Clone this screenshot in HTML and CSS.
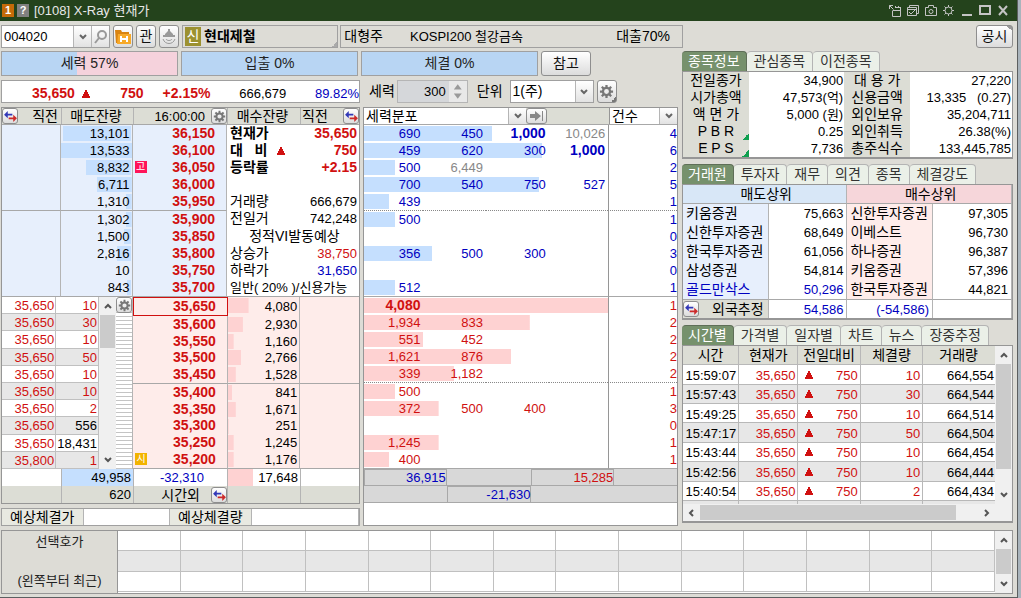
FILE: index.html
```html
<!DOCTYPE html>
<html lang="ko">
  <head>
    <meta charset="UTF-8" />
    <meta name="viewport" content="width=device-width, initial-scale=1.0" />
    <title>[0108] X-Ray 현재가</title>
    <link rel="stylesheet" href="styles.css" />
  </head>
  <body>
    <!-- 공용 아이콘 -->
    <svg class="symbols" aria-hidden="true">
      <symbol id="gear" viewBox="0 0 16 16">
        <path fill="none" stroke="currentColor" stroke-width="2.4" d="M8 1v3M8 12v3M1 8h3M12 8h3M3 3l2.2 2.2M10.8 10.8L13 13M13 3l-2.2 2.2M5.2 10.8L3 13" />
        <circle cx="8" cy="8" r="3.8" fill="none" stroke="currentColor" stroke-width="2.4" />
      </symbol>
      <symbol id="swap" viewBox="0 0 14 12">
        <path fill="#3338b8" d="M0 4l4-4v3h5v2H4v3z" />
        <path fill="#cc2a2a" d="M14 8l-4-4v3H5v2h5v3z" />
      </symbol>
      <symbol id="down" viewBox="0 0 8 6">
        <path fill="none" stroke="currentColor" stroke-width="2" d="M1 1l3 3 3-3" />
      </symbol>
      <symbol id="up" viewBox="0 0 8 6">
        <path fill="none" stroke="currentColor" stroke-width="2" d="M1 5l3-3 3 3" />
      </symbol>
      <symbol id="left" viewBox="0 0 6 8">
        <path fill="none" stroke="currentColor" stroke-width="2" d="M5 1L2 4l3 3" />
      </symbol>
      <symbol id="right" viewBox="0 0 6 8">
        <path fill="none" stroke="currentColor" stroke-width="2" d="M1 1l3 3-3 3" />
      </symbol>
      <symbol id="tri" viewBox="0 0 8 8">
        <path fill="currentColor" d="M3 0h2v2h1v2h1v2h1v2H0V6h1V4h1V2h1z" />
      </symbol>
    </svg>

    <div class="window">
      <header class="titlebar">
        <span class="tag orange">1</span>
        <span class="tag gray">?</span>
        <h1>[0108] X-Ray 현재가</h1>
        <div class="win_btns">
          <svg width="14" height="13" viewBox="0 0 14 13"><path d="M1.500 1.500l4 4M1.500 5V1.500H5M7 3.500h6M4.500 7v5.500h8v-9M4.500 6.500h8M7.500 2v2M10.500 2v2" /></svg>
          <svg width="14" height="13" viewBox="0 0 14 13"><path d="M3.500 3V1.500h9v8H11M1.500 3.500h9v8h-9zM1.500 5.500h9M3 8l2 2 4-4" /></svg>
          <svg width="14" height="13" viewBox="0 0 14 13"><path d="M1.500 3.500h3v-2h5v2h3v8h-11z" /><circle cx="7" cy="7.500" r="2" /></svg>
          <svg width="13" height="13" viewBox="0 0 13 13"><circle cx="6.500" cy="6.500" r="3.500" /><path d="M6.500 1v2M6.500 10v2M1 6.500h2M10 6.500h2M2.500 2.500L4 4M9 9l1.500 1.500M10.500 2.500L9 4M4 9l-1.500 1.500" /></svg>
          <svg class="bold" width="12" height="13" viewBox="0 0 12 13"><path d="M1 11h10" /></svg>
          <svg class="bold" width="12" height="13" viewBox="0 0 12 13"><path d="M1 2h10v8H1z" /></svg>
          <svg class="bold" width="12" height="13" viewBox="0 0 12 13"><path d="M2 2l8 9M10 2l-8 9" /></svg>
        </div>
      </header>

      <div class="toolbar">
        <div class="code_box">
          <input type="text" value="004020" aria-label="종목코드" />
          <button class="arrow" aria-label="목록"><svg width="8" height="6"><use href="#down" /></svg></button>
          <button class="arrow" aria-label="검색"><svg class="lens" width="14" height="14" viewBox="0 0 14 14"><circle cx="8" cy="5" r="4" /><path d="M5 8l-4 5" /></svg></button>
        </div>
        <button class="btn icon" aria-label="보유종목">
          <svg width="16" height="15" viewBox="0 0 16 15"><path fill="#d98410" d="M0 1h6l1 2h7v11H1z" /><path fill="#f7a928" d="M3 5h13v10H2z" /><path stroke="#fff" stroke-width="2" d="M6 7v6M12 7v6M6 10h6" /></svg>
        </button>
        <button class="btn icon">관</button>
        <button class="btn icon" aria-label="알림">
          <svg width="14" height="15" viewBox="0 0 14 15"><path fill="#999" d="M6 0h2v2l3 3v3H3V5l3-3zM1 6h12v2H1z" /><path fill="none" stroke="#999" d="M4 10c1 2 5 2 6 0M1 10c2 6 10 6 12 0" /></svg>
        </button>
        <div class="name_box"><span class="credit">신</span><strong>현대제철</strong></div>
        <div class="kind_box"><span>대형주</span><span class="kospi">KOSPI200 철강금속</span><span>대출70%</span></div>
        <button class="btn notice">공시</button>
      </div>

      <main class="main">
        <section class="left">
          <div class="power">
            <div class="bar half">세력 57%</div>
            <div class="bar">입출 0%</div>
            <div class="bar">체결 0%</div>
            <button class="btn">참고</button>
          </div>

          <div class="split">
            <div class="quote">
              <b>35,650</b>
              <svg width="8" height="8"><use href="#tri" /></svg>
              <b>750</b>
              <b>+2.15%</b>
              <span>666,679</span>
              <span class="blue">89.82%</span>
            </div>
            <div class="options">
              <label for="power">세력</label>
              <div class="spin">
                <input id="power" type="text" value="300" />
                <div class="steps"><button aria-label="증가"></button><button aria-label="감소"></button></div>
              </div>
              <label for="unit">단위</label>
              <div class="combo unit">
                <select id="unit"><option>1(주)</option></select>
                <span class="arrow"><svg width="8" height="6"><use href="#down" /></svg></span>
              </div>
              <button class="btn icon more_menu" aria-label="설정"><svg width="15" height="15"><use href="#gear" /></svg></button>
            </div>
          </div>

          <div class="split grow">
            <div class="col">
              <!-- 호가창 -->
              <div class="panel">
                <div class="book_head">
                  <div><button class="btn mini" aria-label="전환"><svg width="13" height="11"><use href="#swap" /></svg></button><span>직전</span></div>
                  <div class="mid">매도잔량</div>
                  <div class="clock"><span>16:00:00</span><button class="btn mini" aria-label="설정"><svg width="13" height="13"><use href="#gear" /></svg></button></div>
                  <div class="mid">매수잔량</div>
                  <div><span>직전</span><button class="btn mini" aria-label="전환"><svg width="13" height="11"><use href="#swap" /></svg></button></div>
                </div>

                <div class="asks">
                  <table class="book ask">
                    <colgroup><col class="c59" /><col class="c72" /><col /></colgroup>
                    <tr><td></td><td style="--w: 96%">13,101</td><td class="price">36,150</td></tr>
                    <tr><td></td><td style="--w: 100%">13,533</td><td class="price">36,100</td></tr>
                    <tr><td></td><td style="--w: 64%">8,832</td><td class="price"><i class="badge high">고</i>36,050</td></tr>
                    <tr><td></td><td style="--w: 49%">6,711</td><td class="price">36,000</td></tr>
                    <tr class="line"><td></td><td style="--w: 8%">1,310</td><td class="price">35,950</td></tr>
                    <tr><td></td><td style="--w: 8%">1,302</td><td class="price">35,900</td></tr>
                    <tr><td></td><td style="--w: 10%">1,500</td><td class="price">35,850</td></tr>
                    <tr><td></td><td style="--w: 20%">2,816</td><td class="price">35,800</td></tr>
                    <tr><td></td><td style="--w: 0%">10</td><td class="price">35,750</td></tr>
                    <tr><td></td><td style="--w: 6%">843</td><td class="price">35,700</td></tr>
                  </table>
                  <table class="info">
                    <tr class="b"><th>현재가</th><td class="red">35,650</td></tr>
                    <tr class="b"><th>대&nbsp;&nbsp; 비 <svg width="8" height="8"><use href="#tri" /></svg></th><td class="red">750</td></tr>
                    <tr class="b"><th>등락률</th><td class="red">+2.15</td></tr>
                    <tr><td colspan="2">&nbsp;</td></tr>
                    <tr><th>거래량</th><td>666,679</td></tr>
                    <tr><th>전일거</th><td>742,248</td></tr>
                    <tr><th colspan="2" class="center">정적VI발동예상</th></tr>
                    <tr><th>상승가</th><td class="red">38,750</td></tr>
                    <tr><th>하락가</th><td class="blue">31,650</td></tr>
                    <tr><th colspan="2" class="state">일반( 20% )/신용가능</th></tr>
                  </table>
                </div>

                <div class="bids">
                  <div class="ticks">
                    <table class="tick">
                      <colgroup><col class="c54" /><col /></colgroup>
                      <tr><td>35,650</td><td>10</td></tr>
                      <tr><td>35,650</td><td>30</td></tr>
                      <tr><td>35,650</td><td>10</td></tr>
                      <tr><td>35,650</td><td>50</td></tr>
                      <tr><td>35,650</td><td>10</td></tr>
                      <tr><td>35,650</td><td>10</td></tr>
                      <tr><td>35,650</td><td>2</td></tr>
                      <tr><td>35,650</td><td class="black">556</td></tr>
                      <tr><td>35,650</td><td class="black">18,431</td></tr>
                      <tr><td>35,800</td><td>1</td></tr>
                    </table>
                    <div class="vscroll">
                      <svg width="8" height="6"><use href="#up" /></svg>
                      <div class="track"><div class="thumb" style="height: 24%"></div></div>
                      <svg width="8" height="6"><use href="#down" /></svg>
                    </div>
                    <div class="gauge">
                      <button class="btn mini" aria-label="설정"><svg width="13" height="13"><use href="#gear" /></svg></button>
                    </div>
                  </div>
                  <table class="book bid">
                    <colgroup><col class="c94" /><col class="c73" /><col /></colgroup>
                    <tr class="now"><td class="price">35,650</td><td style="--w: 29%">4,080</td><td></td></tr>
                    <tr><td class="price">35,600</td><td style="--w: 21%">2,930</td><td></td></tr>
                    <tr><td class="price">35,550</td><td style="--w: 8%">1,160</td><td></td></tr>
                    <tr><td class="price">35,500</td><td style="--w: 19%">2,766</td><td></td></tr>
                    <tr class="line"><td class="price">35,450</td><td style="--w: 11%">1,528</td><td></td></tr>
                    <tr><td class="price">35,400</td><td style="--w: 6%">841</td><td></td></tr>
                    <tr><td class="price">35,350</td><td style="--w: 11%">1,671</td><td></td></tr>
                    <tr><td class="price">35,300</td><td style="--w: 1%">251</td><td></td></tr>
                    <tr><td class="price">35,250</td><td style="--w: 8%">1,245</td><td></td></tr>
                    <tr><td class="price"><i class="badge open">시</i>35,200</td><td style="--w: 8%">1,176</td><td></td></tr>
                  </table>
                </div>

                <div class="sums">
                  <div></div><div class="ask_sum">49,958</div><div class="diff">-32,310</div><div class="bid_sum">17,648</div><div></div>
                </div>
                <div class="sums after">
                  <div></div><div>620</div>
                  <div class="clock"><span>시간외</span><button class="btn mini" aria-label="전환"><svg width="13" height="11"><use href="#swap" /></svg></button></div>
                  <div></div><div></div>
                </div>
              </div>

              <div class="expect">
                <label for="exp_price">예상체결가</label><input id="exp_price" type="text" />
                <label for="exp_qty">예상체결량</label><input id="exp_qty" type="text" />
              </div>
            </div>

            <!-- 세력분포 -->
            <div class="panel spread">
              <div class="spread_head">
                <div class="combo">
                  <select aria-label="분포"><option>세력분포</option></select>
                  <span class="arrow"><svg width="8" height="6"><use href="#down" /></svg></span>
                </div>
                <button class="btn mini" aria-label="다음"><svg width="14" height="10" viewBox="0 0 14 10"><path fill="#888" d="M0 3h5V0l6 5-6 5V7H0zM12 0h1v10h-1z" /></svg></button>
                <div></div>
                <div class="combo">
                  <select aria-label="건수"><option>건수</option></select>
                  <span class="arrow"><svg width="8" height="6"><use href="#down" /></svg></span>
                </div>
              </div>
              <table class="dist sell">
                <colgroup><col class="p19" /><col class="p20" /><col class="p20" /><col class="p19" /><col /></colgroup>
                <tr style="--w: 41%"><td>690</td><td>450</td><td class="big">1,000</td><td class="dim">10,026</td><td>4</td></tr>
                <tr style="--w: 57%"><td>459</td><td>620</td><td>300</td><td class="big">1,000</td><td>6</td></tr>
                <tr style="--w: 10%"><td>500</td><td class="dim">6,449</td><td></td><td></td><td>2</td></tr>
                <tr style="--w: 56%"><td>700</td><td>540</td><td>750</td><td>527</td><td>5</td></tr>
                <tr class="line" style="--w: 8%"><td>439</td><td></td><td></td><td></td><td>1</td></tr>
                <tr style="--w: 10%"><td>500</td><td></td><td></td><td></td><td>1</td></tr>
                <tr style="--w: 0%"><td></td><td></td><td></td><td></td><td>0</td></tr>
                <tr style="--w: 22%"><td>356</td><td>500</td><td>300</td><td></td><td>3</td></tr>
                <tr style="--w: 0%"><td></td><td></td><td></td><td></td><td>0</td></tr>
                <tr style="--w: 10%"><td>512</td><td></td><td></td><td></td><td>1</td></tr>
              </table>
              <table class="dist buy">
                <colgroup><col class="p19" /><col class="p20" /><col class="p20" /><col class="p19" /><col /></colgroup>
                <tr style="--w: 78%"><td class="big">4,080</td><td></td><td></td><td></td><td>1</td></tr>
                <tr style="--w: 53%"><td>1,934</td><td>833</td><td></td><td></td><td>2</td></tr>
                <tr style="--w: 19%"><td>551</td><td>452</td><td></td><td></td><td>2</td></tr>
                <tr style="--w: 47%"><td>1,621</td><td>876</td><td></td><td></td><td>2</td></tr>
                <tr class="line" style="--w: 29%"><td>339</td><td>1,182</td><td></td><td></td><td>2</td></tr>
                <tr style="--w: 10%"><td>500</td><td></td><td></td><td></td><td>1</td></tr>
                <tr style="--w: 24%"><td>372</td><td>500</td><td>400</td><td></td><td>3</td></tr>
                <tr style="--w: 0%"><td></td><td></td><td></td><td></td><td>0</td></tr>
                <tr style="--w: 24%"><td>1,245</td><td></td><td></td><td></td><td>1</td></tr>
                <tr style="--w: 8%"><td>400</td><td></td><td></td><td></td><td>1</td></tr>
              </table>
              <div class="totals">
                <span class="blue box">36,915</span><span></span><span class="red box">15,285</span><span></span>
                <span></span><span class="blue box">-21,630</span><span></span><span></span>
              </div>
            </div>
          </div>
        </section>

        <aside class="right">
          <div>
            <div class="tabs">
              <button class="on">종목정보</button><button>관심종목</button><button>이전종목</button>
            </div>
            <table class="stock">
              <colgroup><col class="p20" /><col class="p29" /><col class="p20" /><col /></colgroup>
              <tr><th>전일종가</th><td>34,900</td><th>대 용 가</th><td>27,220</td></tr>
              <tr><th>시가총액</th><td>47,573(억)</td><th>신용금액</th><td>13,335 &nbsp; (0.27)</td></tr>
              <tr><th>액 면 가</th><td>5,000 (원)</td><th>외인보유</th><td>35,204,711</td></tr>
              <tr><th class="more">P B R</th><td>0.25</td><th>외인취득</th><td>26.38(%)</td></tr>
              <tr><th class="more">E P S</th><td>7,736</td><th>총주식수</th><td>133,445,785</td></tr>
            </table>
          </div>

          <div>
            <div class="tabs">
              <button class="on">거래원</button><button>투자자</button><button>재무</button><button>의견</button><button>종목</button><button>체결강도</button>
            </div>
            <table class="broker">
              <colgroup><col class="p26" /><col class="p24" /><col class="p26" /><col /></colgroup>
              <tr class="top"><th colspan="2" class="sell_top">매도상위</th><th colspan="2" class="buy_top">매수상위</th></tr>
              <tr><th>키움증권</th><td>75,663</td><th>신한투자증권</th><td>97,305</td></tr>
              <tr><th>신한투자증권</th><td>68,649</td><th>이베스트</th><td>96,730</td></tr>
              <tr><th>한국투자증권</th><td>61,056</td><th>하나증권</th><td>96,387</td></tr>
              <tr><th>삼성증권</th><td>54,814</td><th>키움증권</th><td>57,396</td></tr>
              <tr><th class="blue">골드만삭스</th><td class="blue">50,296</td><th>한국투자증권</th><td>44,821</td></tr>
              <tr class="foreign">
                <th><div class="foreign_label"><button class="btn mini" aria-label="전환"><svg width="13" height="11"><use href="#swap" /></svg></button><span>외국추정</span></div></th>
                <td class="blue">54,586</td><td class="blue">(-54,586)</td><td></td>
              </tr>
            </table>
          </div>

          <div class="grow">
            <div class="tabs">
              <button class="on">시간별</button><button>가격별</button><button>일자별</button><button>차트</button><button>뉴스</button><button>장중추정</button>
            </div>
            <div class="times">
              <div class="times_view">
                <table class="time">
                  <colgroup><col class="p18" /><col class="p19" /><col class="p20" /><col class="p20" /><col /></colgroup>
                  <tr><th>시간</th><th>현재가</th><th>전일대비</th><th>체결량</th><th>거래량</th></tr>
                  <tr><td>15:59:07</td><td>35,650</td><td><svg width="8" height="8"><use href="#tri" /></svg>750</td><td>10</td><td>664,554</td></tr>
                  <tr><td>15:57:43</td><td>35,650</td><td><svg width="8" height="8"><use href="#tri" /></svg>750</td><td>30</td><td>664,544</td></tr>
                  <tr><td>15:49:25</td><td>35,650</td><td><svg width="8" height="8"><use href="#tri" /></svg>750</td><td>10</td><td>664,514</td></tr>
                  <tr><td>15:47:17</td><td>35,650</td><td><svg width="8" height="8"><use href="#tri" /></svg>750</td><td>50</td><td>664,504</td></tr>
                  <tr><td>15:43:44</td><td>35,650</td><td><svg width="8" height="8"><use href="#tri" /></svg>750</td><td>10</td><td>664,454</td></tr>
                  <tr><td>15:42:56</td><td>35,650</td><td><svg width="8" height="8"><use href="#tri" /></svg>750</td><td>10</td><td>664,444</td></tr>
                  <tr><td>15:40:54</td><td>35,650</td><td><svg width="8" height="8"><use href="#tri" /></svg>750</td><td>2</td><td>664,434</td></tr>
                  <tr class="rest"><td></td><td></td><td></td><td></td><td></td></tr>
                </table>
                <div class="vscroll">
                  <svg width="8" height="6"><use href="#up" /></svg>
                  <div class="track"><div class="thumb" style="height: 86%"></div></div>
                  <svg width="8" height="6"><use href="#down" /></svg>
                </div>
              </div>
              <div class="hscroll">
                <svg width="6" height="8"><use href="#left" /></svg>
                <div class="track"><div class="thumb" style="width: 92%"></div></div>
                <svg width="6" height="8"><use href="#right" /></svg>
              </div>
            </div>
          </div>
        </aside>
      </main>

      <!-- 선택호가 -->
      <footer class="picked">
        <div class="picked_label"><span>선택호가</span><span>(왼쪽부터 최근)</span></div>
        <table>
          <tr><td></td><td></td><td></td><td></td><td></td><td></td><td></td><td></td><td></td><td></td><td></td><td></td><td></td><td></td></tr>
          <tr><td></td><td></td><td></td><td></td><td></td><td></td><td></td><td></td><td></td><td></td><td></td><td></td><td></td><td></td></tr>
          <tr><td></td><td></td><td></td><td></td><td></td><td></td><td></td><td></td><td></td><td></td><td></td><td></td><td></td><td></td></tr>
        </table>
        <div class="vscroll">
          <svg width="8" height="6"><use href="#up" /></svg>
          <div class="track"><div class="thumb" style="height: 96%"></div></div>
          <svg width="8" height="6"><use href="#down" /></svg>
        </div>
      </footer>
    </div>
  </body>
</html>
```
FILE: styles.css
```css
* {
  margin: 0;
  padding: 0;
  box-sizing: border-box;
}
body {
  min-height: 100vh;
  background: #a9b4bc;
  color: #000;
  font-family: "Liberation Sans", "Noto Sans CJK KR", sans-serif;
  font-size: 13px;
  line-height: 15px;
}
button,
input,
select {
  font: inherit;
  color: inherit;
  border: 0;
  background: none;
  min-width: 0;
}
table {
  width: 100%;
  table-layout: fixed;
  border-collapse: separate;
  border-spacing: 0;
}
th {
  font-size: 14px;
  font-weight: 400;
  white-space: nowrap;
}
td {
  text-align: right;
  white-space: nowrap;
}
svg {
  flex: none;
}
.symbols {
  position: absolute;
  width: 0;
  height: 0;
}
.red {
  color: #d01010;
}
.blue {
  color: #0000c0;
}
/* 비율 컬럼 */
.p18 { width: 18%; }
.p19 { width: 19%; }
.p20 { width: 20%; }
.p24 { width: 24%; }
.p26 { width: 26%; }
.p29 { width: 29%; }

.window {
  margin-right: 3px;
  min-height: 598px;
  border-right: 1px solid #5c5f60;
  border-bottom: 1px solid #5c5f60;
  background: #dddcd6;
}

/* 타이틀바 */
.titlebar {
  display: flex;
  align-items: center;
  height: 21px;
  padding: 0 8px 0 2px;
  gap: 3px;
  background: #24431c;
  color: #e8e8e8;
}
.titlebar h1 {
  margin-left: 2px;
  font-size: 13px;
  font-weight: 400;
}
.tag {
  width: 12px;
  height: 13px;
  font-size: 11px;
  font-weight: 700;
  line-height: 13px;
  text-align: center;
  color: #fff;
}
.orange {
  background: #c46a08;
}
.gray {
  background: #808080;
}
.win_btns {
  display: flex;
  gap: 4px;
  margin-left: auto;
}
.win_btns svg {
  fill: none;
  stroke: #c4c4c4;
}
.win_btns .bold {
  margin-left: 2px;
  stroke-width: 2;
}

/* 버튼 */
.btn {
  display: flex;
  align-items: center;
  justify-content: center;
  border: 1px solid #8e8e8e;
  border-radius: 3px;
  background: linear-gradient(#fff, #dcdcdc);
  font-size: 14px;
  color: #111;
}
.btn svg {
  color: #777;
}
.icon {
  width: 20px;
}
.more_menu {
  background: linear-gradient(135deg, transparent 50%, #777 0) no-repeat right bottom / 5px 5px, linear-gradient(#fff, #dcdcdc);
}
.mini {
  flex: none;
  width: 16px;
  height: 16px;
}
.arrow {
  display: flex;
  flex: none;
  align-items: center;
  justify-content: center;
  width: 18px;
  border-left: 1px solid #b5b5b5;
  background: linear-gradient(#fff, #e2e2e2);
  color: #666;
}
.lens {
  fill: none;
  stroke: #999;
  stroke-width: 2;
}
.combo {
  display: flex;
  min-width: 0;
  background: #fff;
}
.combo select {
  flex: 1;
  padding-left: 2px;
  appearance: none;
  font-size: 14px;
}

/* 상단 툴바 */
.toolbar {
  display: flex;
  height: 23px;
  margin: 4px 4px 3px 1px;
  gap: 3px;
}
.code_box {
  display: flex;
  width: 109px;
  border: 1px solid #a0a0a0;
  background: #fff;
}
.code_box input {
  flex: 1;
  width: 0;
  padding-left: 2px;
}
.name_box,
.kind_box {
  display: flex;
  align-items: center;
  border: 1px solid #a0a0a0;
  font-size: 14px;
}
.name_box {
  flex: 160;
  gap: 3px;
  padding-left: 2px;
  background: linear-gradient(135deg, transparent 50%, #aaa 0) no-repeat right bottom / 5px 5px;
}
.credit {
  width: 16px;
  line-height: 19px;
  text-align: center;
  background: #9c9130;
  color: #fff;
}
.kind_box {
  flex: 342;
  margin-left: -1px;
  padding: 0 12px 0 3px;
}
.kospi {
  margin: 0 auto 0 27px;
  font-size: 13px;
}
.notice {
  flex: none;
  width: 37px;
  margin-left: 290px;
  background: linear-gradient(45deg, transparent 50%, #999 0) no-repeat right top / 5px 5px, linear-gradient(#fff, #dcdcdc);
}

/* 본문 2단 */
.main {
  display: grid;
  grid-template-columns: 677fr 331fr;
  gap: 4px;
  margin: 0 4px 0 1px;
}
.left,
.right,
.col {
  display: flex;
  flex-direction: column;
  min-width: 0;
}
.left,
.col {
  gap: 4px;
}
.right {
  gap: 5px;
}
.grow {
  flex: 1;
}
.power {
  display: grid;
  grid-template-columns: 177fr 177fr 177fr 50fr 84fr;
  gap: 3px;
  height: 25px;
}
.bar {
  border: 1px solid #a0a0a0;
  background: #b8d5f3;
  color: #222;
  font-size: 14px;
  line-height: 22px;
  text-align: center;
}
.half {
  background: linear-gradient(90deg, #b8d5f3 43%, #f5d2dc 0);
}
.split {
  display: grid;
  grid-template-columns: 359fr 315fr;
  gap: 3px;
}
.quote {
  display: grid;
  grid-template-columns: 73fr 15fr 54fr 67fr 76fr 73fr;
  align-items: center;
  height: 23px;
  padding-top: 4px;
  border: 1px solid #a0a0a0;
  background: #fff;
  text-align: right;
}
.quote b {
  font-size: 14px;
  color: #d01010;
}
.quote svg {
  margin-left: 7px;
  color: #d01010;
}
.options {
  display: flex;
  align-items: stretch;
  height: 23px;
  padding-left: 6px;
}
.options label {
  align-self: center;
  font-size: 14px;
}
.spin {
  display: flex;
  width: 71px;
  margin: 0 9px 0 2px;
  border: 1px solid #b5b5b5;
  background: #d5d7da;
}
.spin input {
  flex: 1;
  width: 0;
  padding-right: 3px;
  text-align: right;
}
.steps {
  display: flex;
  flex-direction: column;
  width: 18px;
  background: #e8e8e8;
}
.steps button {
  flex: 1;
  background: #999;
  clip-path: polygon(50% 30%, 28% 80%, 72% 80%);
}
.steps button + button {
  clip-path: polygon(50% 70%, 28% 20%, 72% 20%);
}
.unit {
  width: 84px;
  margin: 0 3px 0 7px;
  border: 1px solid #a0a0a0;
}

/* 호가창 */
.panel {
  border: 1px solid #969696;
  background: #fff;
}
.book_head,
.sums {
  display: grid;
  grid-template-columns: 59fr 72fr 94fr 73fr 59fr;
  height: 17px;
}
.book_head {
  border-bottom: 1px solid #a8a8a8;
  background: #dcddd5;
}
.book_head > div {
  display: flex;
  align-items: center;
  justify-content: space-between;
  min-width: 0;
  padding-right: 3px;
  font-size: 14px;
}
.book_head > div + div,
.sums > div + div {
  border-left: 1px solid #b4b4b4;
}
.book_head > .mid {
  justify-content: center;
}
.book_head > .clock,
.sums > .clock {
  display: flex;
  align-items: center;
  justify-content: flex-end;
  gap: 6px;
  padding-right: 0;
}
.book_head .clock span {
  font-size: 13px;
}
.book_head > div:last-child {
  padding: 0 0 0 1px;
}
.asks {
  display: grid;
  grid-template-columns: 225fr 132fr;
}
.bids {
  display: grid;
  grid-template-columns: 131fr 226fr;
}
.book,
.info,
.tick,
.dist {
  height: 172px;
}
.book td,
.info td {
  padding-right: 2px;
}
.c59 { width: 26%; }
.c72 { width: 32%; }
.c94 { width: 42%; }
.c73 { width: 32%; }
.c54 { width: 56%; }
.book td {
  border-right: 1px solid #b4b4b4;
}
.book .price {
  padding-right: 11px;
  font-size: 14px;
  font-weight: 700;
  color: #d01010;
}
.ask {
  background: #e7effc;
}
.ask td:nth-child(2) {
  background: linear-gradient(#c5dffe, #c5dffe) no-repeat right 1px / var(--w) 15px;
}
.bid {
  background: #feecea;
}
.bid td:last-child {
  border-right: 0;
}
.bid td:nth-child(2) {
  background: linear-gradient(#fed2d2, #fed2d2) no-repeat left 1px / var(--w) 15px;
}
.book .line td,
.book tr:last-child td,
.info tr:last-child th {
  border-bottom: 1px solid #a8a8a8;
}
.bid .now .price {
  border: 1px solid #d01010;
}
.badge {
  float: left;
  width: 12px;
  height: 12px;
  margin: 1px 0 0 2px;
  font-size: 10px;
  font-style: normal;
  font-weight: 400;
  line-height: 12px;
  text-align: center;
  color: #fff;
}
.high {
  background: #ff1459;
}
.open {
  background: #f2b300;
}
.info th {
  width: 60%;
  padding-left: 3px;
  text-align: left;
}
.info .b {
  font-size: 14px;
}
.info .b th,
.info .b td {
  font-weight: 700;
}
.info svg {
  margin-left: 6px;
  color: #d01010;
}
.info .center {
  text-align: center;
}
.info .state {
  font-size: 13px;
}

/* 체결 틱 */
.ticks {
  display: flex;
  border-right: 1px solid #b4b4b4;
}
.tick {
  flex: 1;
  width: 0;
}
.tick td {
  padding: 1px 1px 0 0;
  border-right: 1px solid #c0c0c0;
  border-bottom: 1px solid #c0c0c0;
  color: #d01010;
}
.tick tr:nth-child(even) td {
  background: #e7e7e7;
}
.tick .black {
  color: #000;
}
.vscroll {
  display: flex;
  flex-direction: column;
  align-items: center;
  width: 17px;
  padding: 6px 0;
  background: #f0f0f0;
  color: #555;
}
.vscroll .track {
  flex: 1;
  width: 15px;
  margin: 6px 0;
}
.thumb {
  background: #cbcbcb;
}
.hscroll {
  display: flex;
  align-items: center;
  height: 17px;
  padding: 0 22px 0 5px;
  background: #f0f0f0;
  color: #555;
}
.hscroll .track {
  flex: 1;
  margin: 0 6px;
}
.hscroll .thumb {
  height: 15px;
}
.gauge {
  width: 16px;
  background: repeating-linear-gradient(#fff 0 3px, #c4c4c4 3px 4px);
}
.sums > div {
  padding: 1px 2px 0 0;
  text-align: right;
}
.ask_sum {
  background: #c5dffe;
}
.sums > .diff {
  padding-right: 23px;
  color: #0000c0;
}
.bid_sum {
  background: linear-gradient(90deg, #fed2d2 35%, transparent 0);
}
.after {
  background: #dcddd5;
}
.after .clock {
  font-size: 14px;
}
.sums > .clock {
  gap: 11px;
}
.expect {
  display: grid;
  grid-template-columns: 82fr 87fr 82fr 108fr;
  height: 18px;
  border: 1px solid #a0a0a0;
  background: #fff;
}
.expect label {
  background: #e8e9e1;
  border-right: 1px solid #b4b4b4;
  font-size: 14px;
  line-height: 16px;
  text-align: center;
}
.expect input {
  border-right: 1px solid #b4b4b4;
}

/* 세력분포 */
.spread_head {
  display: grid;
  grid-template-columns: 162fr 21fr 62fr 68fr;
  height: 17px;
  border-bottom: 1px solid #a8a8a8;
  background: #dcddd5;
}
.spread_head .mini {
  width: auto;
}
.spread_head > .combo:last-child {
  border-left: 1px solid #969696;
}
.dist td {
  padding-right: 3px;
}
.dist td:last-child {
  padding-right: 0;
  border-left: 1px solid #969696;
}
.dist .line td {
  border-bottom: 1px dotted #888;
}
.dist tr:last-child td {
  border-bottom: 1px solid #a8a8a8;
}
.sell {
  color: #0000c0;
}
.buy {
  color: #d01010;
}
.sell tr {
  background: linear-gradient(#c5dffe, #c5dffe) no-repeat 0 1px / var(--w) 15px;
}
.buy tr {
  background: linear-gradient(#fed2d2, #fed2d2) no-repeat 0 1px / var(--w) 15px;
}
.dist .big {
  font-size: 14px;
  font-weight: 700;
}
.dist .dim {
  color: #888;
}
.totals {
  display: grid;
  grid-template-columns: 83fr 85fr 83fr 63fr;
  text-align: right;
  background: #d8d8d8;
}
.totals span {
  height: 17px;
  border-bottom: 1px solid #a8a8a8;
}
.totals .box {
  border: 1px solid #a8a8a8;
}

/* 우측 탭 */
.tabs {
  display: flex;
}
.tabs button {
  height: 20px;
  padding: 0 7px;
  border: 1px solid #b4b4b4;
  border-left-width: 0;
  border-bottom: 0;
  border-radius: 4px 4px 0 0;
  background: #ebf0e8;
  color: #333;
  font-size: 14px;
}
.tabs .on {
  padding: 0 6px;
  border-color: #5f6f58;
  background: #76916c;
  color: #fff;
}
.stock,
.broker,
.times {
  border: 1px solid #969696;
  border-bottom-width: 2px;
  background: #fff;
}
.stock tr {
  height: 17px;
}
.stock th {
  background: #dcddd5;
}
.stock td {
  padding-right: 1px;
}
.stock .more {
  background: linear-gradient(135deg, transparent 50%, #10a050 0) no-repeat right bottom / 7px 7px #dcddd5;
}
.broker tr {
  height: 19px;
}
.broker th {
  padding-left: 3px;
  background: #e7effc;
  text-align: left;
}
.broker td,
.broker th {
  border-right: 1px solid #b4b4b4;
}
.broker td {
  padding-right: 3px;
}
.broker td + th {
  background: #feecea;
}
.broker .top th {
  border-bottom: 1px solid #a8a8a8;
  text-align: center;
}
.broker .sell_top {
  background: #d8e7f7;
}
.broker .buy_top {
  background: #f6d6da;
}
.broker .foreign td,
.broker .foreign th {
  border-top: 1px solid #a8a8a8;
}
.broker .foreign th {
  padding: 0 4px 0 0;
  background: #dcddd5;
}
.foreign_label {
  display: flex;
  align-items: center;
  justify-content: space-between;
}
.times_view {
  display: flex;
}
.time {
  flex: 1;
  width: 0;
  height: 158px;
}
.time tr {
  height: 19px;
}
.time th {
  height: 19px;
  background: #dcddd5;
}
.time th,
.time td {
  border-right: 1px solid #b8b8b8;
  border-bottom: 1px solid #b8b8b8;
}
.time td {
  padding: 2px 2px 0 0;
  color: #d01010;
}
.time td:first-child,
.time td:last-child {
  color: #000;
}
.time td:first-child {
  padding-right: 2px;
}
.time th:last-child,
.time td:last-child {
  padding-right: 1px;
  border-right: 0;
}
.time tr:nth-child(odd) td {
  background: #e7e7e7;
}
.time td svg {
  float: left;
  margin: 3px 0 0 7px;
}
.time .rest,
.time .rest td {
  height: 3px;
  padding: 0;
  border-bottom: 0;
}

/* 하단 선택호가 */
.picked {
  display: flex;
  height: 64px;
  margin: 4px 4px 0 1px;
  border: 1px solid #969696;
  background: #fff;
}
.picked_label {
  display: flex;
  flex-direction: column;
  align-items: center;
  justify-content: space-between;
  width: 116px;
  padding: 3px 0 5px;
  border-right: 1px solid #969696;
  background: #dddcd6;
  color: #222;
}
.picked table {
  flex: 1;
  width: 0;
  height: 61px;
}
.picked td {
  border-right: 1px solid #c0c0c0;
  border-bottom: 1px solid #c0c0c0;
}
.picked tr:nth-child(even) td {
  background: #e7e7e7;
}
```
